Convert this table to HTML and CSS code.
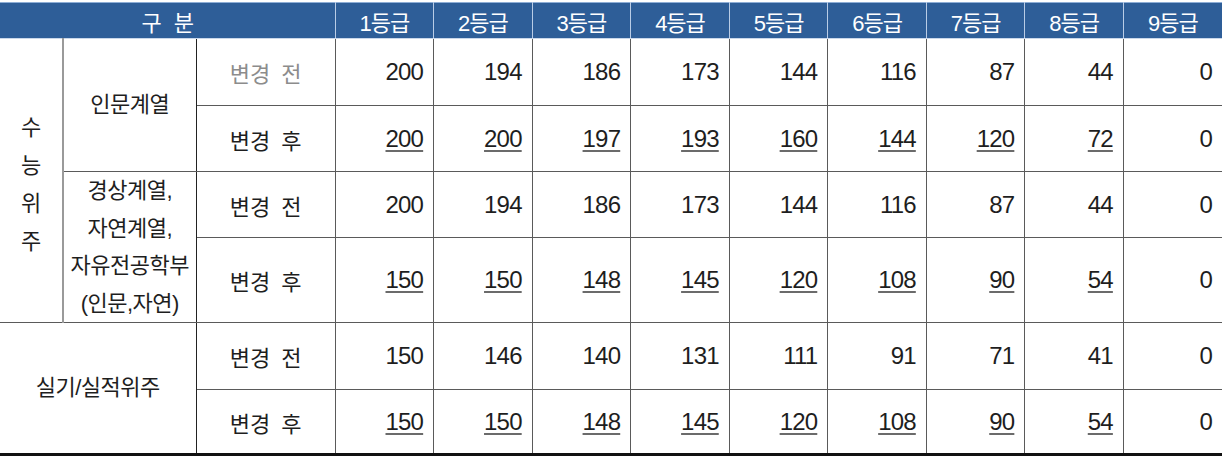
FILE: index.html
```html
<!DOCTYPE html>
<html lang="ko">
<head>
<meta charset="utf-8">
<link rel="stylesheet" href="styles.css">
</head>
<body>
<table class="grade-table">
  <colgroup>
    <col class="c-a"><col class="c-b"><col class="c-c">
    <col class="c-g"><col class="c-g"><col class="c-g"><col class="c-g"><col class="c-g"><col class="c-g"><col class="c-g"><col class="c-g"><col class="c-g">
  </colgroup>
  <thead>
    <tr>
      <th colspan="3">구 분</th>
      <th>1등급</th><th>2등급</th><th>3등급</th><th>4등급</th><th>5등급</th><th>6등급</th><th>7등급</th><th>8등급</th><th>9등급</th>
    </tr>
  </thead>
  <tbody>
    <tr class="r1">
      <td rowspan="4" class="vert">수<br>능<br>위<br>주</td>
      <td rowspan="2" class="cat">인문계열</td>
      <td class="kind muted">변경 전</td>
      <td class="num">200</td><td class="num">194</td><td class="num">186</td><td class="num">173</td><td class="num">144</td><td class="num">116</td><td class="num">87</td><td class="num">44</td><td class="num">0</td>
    </tr>
    <tr class="r2 after">
      <td class="kind">변경 후</td>
      <td class="num"><u>200</u></td><td class="num"><u>200</u></td><td class="num"><u>197</u></td><td class="num"><u>193</u></td><td class="num"><u>160</u></td><td class="num"><u>144</u></td><td class="num"><u>120</u></td><td class="num"><u>72</u></td><td class="num">0</td>
    </tr>
    <tr class="r3 group">
      <td rowspan="2" class="cat multi">경상계열,<br>자연계열,<br>자유전공학부<br>(인문,자연)</td>
      <td class="kind">변경 전</td>
      <td class="num">200</td><td class="num">194</td><td class="num">186</td><td class="num">173</td><td class="num">144</td><td class="num">116</td><td class="num">87</td><td class="num">44</td><td class="num">0</td>
    </tr>
    <tr class="r4 after">
      <td class="kind">변경 후</td>
      <td class="num"><u>150</u></td><td class="num"><u>150</u></td><td class="num"><u>148</u></td><td class="num"><u>145</u></td><td class="num"><u>120</u></td><td class="num"><u>108</u></td><td class="num"><u>90</u></td><td class="num"><u>54</u></td><td class="num">0</td>
    </tr>
    <tr class="r5 group">
      <td rowspan="2" colspan="2" class="cat">실기/실적위주</td>
      <td class="kind">변경 전</td>
      <td class="num">150</td><td class="num">146</td><td class="num">140</td><td class="num">131</td><td class="num">111</td><td class="num">91</td><td class="num">71</td><td class="num">41</td><td class="num">0</td>
    </tr>
    <tr class="r6 after last">
      <td class="kind">변경 후</td>
      <td class="num"><u>150</u></td><td class="num"><u>150</u></td><td class="num"><u>148</u></td><td class="num"><u>145</u></td><td class="num"><u>120</u></td><td class="num"><u>108</u></td><td class="num"><u>90</u></td><td class="num"><u>54</u></td><td class="num">0</td>
    </tr>
  </tbody>
</table>
</body>
</html>
```
FILE: styles.css
```css
html, body {
  margin: 0;
  padding: 0;
  background: #ffffff;
}
body {
  padding-top: 2px;
  font-family: "Liberation Sans", "Noto Sans CJK KR", sans-serif;
  color: #1e1e1e;
}
.grade-table {
  border-collapse: collapse;
  table-layout: fixed;
  width: 1222px;
}
.c-a { width: 63px; }
.c-b { width: 133px; }
.c-c { width: 139px; }
.c-g { width: 98.5px; }

.grade-table th {
  background: #2e5e98;
  color: #ffffff;
  font-weight: normal;
  font-size: 22px;
  height: 35px;
  padding: 0;
  border-top: 1px solid #8eaed6;
  border-bottom: 1px solid #c9d7ea;
  border-left: 1px solid #b9cce6;
  border-right: 1px solid #b9cce6;
  letter-spacing: -1px;
}
.grade-table th:first-child { border-left: none; word-spacing: 8px; }
.grade-table th:last-child { border-right: none; }

.grade-table td {
  padding: 0;
  font-size: 22px;
  border: 1px solid #5a5a5a;
  text-align: center;
}
.grade-table tbody tr td:first-child { border-left: none; }
.grade-table tbody tr td:last-child { border-right: none; }
.grade-table tbody tr:first-child td { border-top: none; }

.r1 td { height: 66px; }
.r2 td { height: 65px; }
.r3 td { height: 65px; }
.r4 td { height: 84px; }
.r5 td { height: 66px; }
.r6 td { height: 63px; }

.grade-table tr.group td { border-top-color: #8a8a8a; }
.grade-table tr.last td { border-bottom: 3px solid #111111; }

.vert {
  line-height: 38px;
  font-size: 21px;
  padding-top: 8px !important;
  border-right: 2px solid #9a9a9a !important;
}
.cat {
  font-size: 21px;
  line-height: 36px;
  letter-spacing: -0.5px;
  border-right-color: #222 !important;
}
.cat.multi { line-height: 37.5px; }
.grade-table tr.r5 td.cat { border-bottom: 3px solid #111111; }
.kind {
  font-size: 22px;
  word-spacing: 5px;
  border-left-color: #222 !important;
}
.kind.muted { color: #8c8c8c; }
.num {
  text-align: right !important;
  padding-right: 10px !important;
  font-size: 24px !important;
  letter-spacing: -0.8px;
}
.num u {
  text-decoration-color: #6b6b6b;
  text-decoration-thickness: 1.5px;
  text-underline-offset: 3px;
}
```
